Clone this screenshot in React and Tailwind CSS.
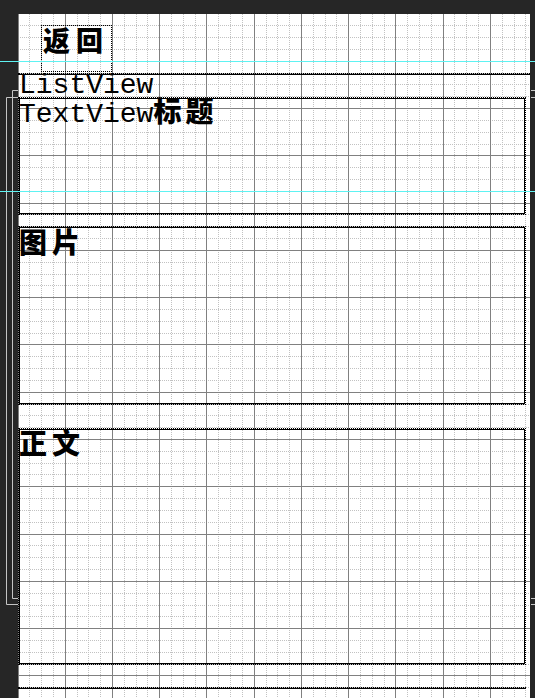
import React from "react";

const STEP = 11.81;
const MONO = "font-['Liberation_Mono','Noto_Sans_CJK_SC',monospace]";
const CJK = "font-['Noto_Sans_CJK_SC',sans-serif] font-black";

function Grid() {
  const cols = [];
  for (let k = 0; k * STEP < 512; k++) cols.push(k);
  const rows = [];
  for (let k = 1; k * STEP < 684; k++) rows.push(k);
  const minorX = cols.filter((k) => k % 4 !== 0);
  const minorY = rows.filter((k) => k % 4 !== 0);
  const majorX = cols.filter((k) => k % 4 === 0);
  const majorY = rows.filter((k) => k % 4 === 0);
  return (
    <svg className="absolute inset-0" width="512" height="684">
      {minorX.map((k) => {
        const x = Math.floor(k * STEP) + 0.5;
        return <line key={"mx" + k} x1={x} y1="0" x2={x} y2="684" stroke="#c2c2c2" strokeDasharray="1 1" />;
      })}
      {minorY.map((k) => {
        const y = Math.floor(k * 11.82) + 0.5;
        return <line key={"my" + k} x1="0" y1={y} x2="512" y2={y} stroke="#c2c2c2" strokeDasharray="1 1" />;
      })}
      {majorX.map((k) => {
        const x = Math.floor(k * STEP) + 0.5;
        return <line key={"Mx" + k} x1={x} y1="0" x2={x} y2="684" stroke="#808080" />;
      })}
      {majorY.map((k) => {
        const y = Math.floor(k * 11.82) + 0.5;
        return <line key={"My" + k} x1="0" y1={y} x2="512" y2={y} stroke="#808080" />;
      })}
    </svg>
  );
}

function LeftGutter() {
  return (
    <div className="w-[18px] shrink-0">
      <svg width="18" height="684">
        <g stroke="#c4c4c4" fill="none">
          <path d="M18 76.5H12.5V584.5H18" />
          <path d="M18 83.5H6.5V590.5H18" />
        </g>
      </svg>
    </div>
  );
}

function RightGutter() {
  return (
    <div className="w-[5px] shrink-0">
      <svg width="5" height="684">
        <g stroke="#c4c4c4">
          <path d="M1 76.5H5M1 83.5H5M1 584.5H5M1 590.5H5" />
        </g>
      </svg>
    </div>
  );
}

const box = "w-[508px] border border-dotted border-black shadow-[inset_0_0_0_1px_#000]";

function Caption({ children }) {
  return (
    <p className={`${CJK} text-[28px] leading-[26px] tracking-[5px] text-black`}>{children}</p>
  );
}

export default function App() {
  return (
    <div className="relative w-[535px] h-[698px] overflow-hidden bg-[#262626] flex flex-col">
      <div className="h-[14px] shrink-0" />
      <div className="flex flex-1 min-h-0">
        <LeftGutter />
        <main className="relative w-[512px] bg-white overflow-hidden">
          <Grid />
          <div className="relative flex flex-col">
            <div className="ml-[23px] mt-[11px] w-[71px] h-[47px] border border-dotted border-black pl-[1px] pt-[1px]">
              <span className={`${CJK} text-[27px] leading-[26px] tracking-[6px] text-black`}>返回</span>
            </div>
            <section className="mt-[1px] border-t border-dotted border-black shadow-[inset_0_1px_0_#000]">
              <div className={`${MONO} h-[23px] text-[28px] leading-[24px] pl-[1px] text-black`}>ListView</div>
              <div className={`${box} h-[118px]`}>
                <p className={`${MONO} text-[28px] leading-[24px] text-black`}>
                  TextView<span className={`${CJK} text-[28px] tracking-[4px]`}>标题</span>
                </p>
              </div>
              <div className={`${box} mt-[11px] h-[179px] pt-[1px]`}>
                <Caption>图片</Caption>
              </div>
              <div className={`${box} mt-[23px] h-[237px]`}>
                <Caption>正文</Caption>
              </div>
              <div className="mt-[22px] w-[508px] h-[20px] border-t border-dotted border-black shadow-[inset_0_1px_0_#000]" />
            </section>
          </div>
        </main>
        <RightGutter />
      </div>
      <div className="absolute left-0 right-0 top-[61px] h-px bg-[#5ef2f2]" />
      <div className="absolute left-0 right-0 top-[191px] h-px bg-[#5ef2f2]" />
    </div>
  );
}
